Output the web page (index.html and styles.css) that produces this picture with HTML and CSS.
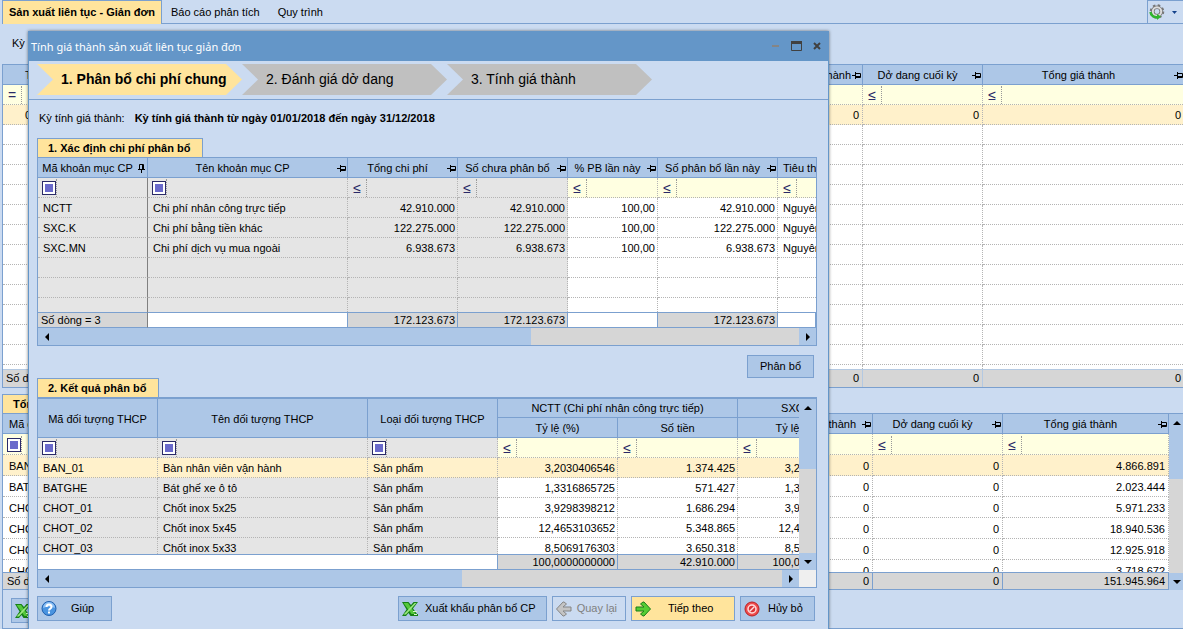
FILE: index.html
```
<!doctype html>
<html lang="vi">

<head>
  <meta charset="utf-8">
  <meta name="viewport" content="width=device-width, initial-scale=1">
  <link rel="stylesheet" href="styles.css">
  <title>Tính giá thành sản xuất liên tục giản đơn</title>
</head>

<body>
  <svg class="sprite" aria-hidden="true">
    <symbol id="pin" viewBox="0 0 9 9">
      <path fill="none" stroke="#000" d="M0 4.500h3M3.500 1v7M4 2.500h4.500v4H4" />
      <path stroke="#000" d="M4 5.500h4" />
    </symbol>
    <symbol id="pin-down" viewBox="0 0 9 9">
      <path fill="none" stroke="#000" d="M2.500 5V.5h4V5M5.500 1v4M1 5.500h7M4.500 6v3" />
    </symbol>
    <symbol id="excel" viewBox="0 0 16 16">
      <path fill="#168016" d="M0 1h6.500l2.500 3 2.500-3H16l-5 6.500 4 5.500h1v2H8.500L6.500 12 4 15H0l4.500-6.500z" />
      <path fill="#55c83c" d="M1.500 2H6l7.500 11H9.500z" />
      <path fill="#9be77f" d="M12.500 2h2L4 13.500H1.500z" />
      <path stroke="#d8f5cc" d="M11 10.500h4M12 13.500h3" />
    </symbol>
    <symbol id="arrow" viewBox="0 0 16 16">
      <path d="M1 6h8L5.500 3 8 1h1l6.500 7L9 15H8l-2.500-2L9 10H1z" stroke-linejoin="round" />
    </symbol>
  </svg>

  <div class="page">
    <nav class="menu">
      <a class="menu-item active" href="#">Sản xuất liên tục - Giản đơn</a>
      <a class="menu-item" href="#">Báo cáo phân tích</a>
      <a class="menu-item" href="#">Quy trình</a>
      <button class="settings" aria-label="Tùy chọn">
        <svg width="16" height="16" viewBox="0 0 16 16">
          <circle cx="8" cy="7.500" r="6" fill="none" stroke="#777" stroke-width="2.500" stroke-dasharray="2.400 2.310" />
          <circle cx="8" cy="7.500" r="4.200" fill="none" stroke="#777" stroke-width="3.500" />
          <circle cx="8" cy="7.500" r="4.200" fill="none" stroke="#ddd" stroke-width="2" />
          <path fill="none" stroke="#2fb52f" stroke-width="2.500" d="M1.500 8c.5 4 4 6 8 5" />
          <path fill="#2fb52f" d="M8 10l4 2.500L8 16z" />
        </svg>
        <svg width="5" height="3" viewBox="0 0 5 3"><path fill="#15428b" d="M0 0h5L2.500 3z" /></svg>
      </button>
    </nav>
    <div class="period">Kỳ</div>

    <div class="grid main-grid">
      <div class="view">
        <table>
          <colgroup><col class="w32"><col><col class="w120"><col class="w120"><col class="w202"></colgroup>
          <thead>
            <tr><th class="start">T</th><th></th>
              <th><div class="head"><span>Khoản giảm giá thành</span><svg><use href="#pin" /></svg></div></th>
              <th><div class="head"><span>Dở dang cuối kỳ</span><svg><use href="#pin" /></svg></div></th>
              <th><div class="head"><span>Tổng giá thành</span><svg><use href="#pin" /></svg></div></th></tr>
            <tr class="filter">
              <td><div class="cell"><button class="op">=</button><input aria-label="Lọc"></div></td>
              <td></td>
              <td><div class="cell"><button class="op">≤</button><input aria-label="Lọc khoản giảm giá thành"></div></td>
              <td><div class="cell"><button class="op">≤</button><input aria-label="Lọc dở dang cuối kỳ"></div></td>
              <td><div class="cell"><button class="op">≤</button><input aria-label="Lọc tổng giá thành"></div></td></tr>
          </thead>
          <tbody>
            <tr class="selected"><td class="num">0</td><td></td><td class="num">0</td><td class="num">0</td><td class="num">0</td></tr>
            <tr><td></td><td></td><td></td><td></td><td></td></tr>
            <tr><td></td><td></td><td></td><td></td><td></td></tr>
            <tr><td></td><td></td><td></td><td></td><td></td></tr>
            <tr><td></td><td></td><td></td><td></td><td></td></tr>
            <tr><td></td><td></td><td></td><td></td><td></td></tr>
            <tr><td></td><td></td><td></td><td></td><td></td></tr>
            <tr><td></td><td></td><td></td><td></td><td></td></tr>
            <tr><td></td><td></td><td></td><td></td><td></td></tr>
            <tr><td></td><td></td><td></td><td></td><td></td></tr>
            <tr><td></td><td></td><td></td><td></td><td></td></tr>
            <tr><td></td><td></td><td></td><td></td><td></td></tr>
            <tr><td></td><td></td><td></td><td></td><td></td></tr>
            <tr><td></td><td></td><td></td><td></td><td></td></tr>
          </tbody>
        </table>
      </div>
      <table class="total">
        <colgroup><col><col class="w120"><col class="w120"><col class="w202"></colgroup>
        <tbody><tr><td>Số dòng = 1</td><td class="num">0</td><td class="num">0</td><td class="num">0</td></tr></tbody>
      </table>
    </div>

    <section class="summary">
      <h2 class="tab">Tổng hợp</h2>
      <div class="grid sum-grid">
        <div class="view">
          <table>
            <colgroup><col><col class="w130"><col class="w130"><col class="w166"></colgroup>
            <thead>
              <tr><th class="start">Mã đối tượng THCP</th>
                <th><div class="head"><span>Khoản giảm giá thành</span><svg><use href="#pin" /></svg></div></th>
                <th><div class="head"><span>Dở dang cuối kỳ</span><svg><use href="#pin" /></svg></div></th>
                <th><div class="head"><span>Tổng giá thành</span><svg><use href="#pin" /></svg></div></th></tr>
              <tr class="filter">
                <td><div class="cell"><button class="op box" aria-label="Điều kiện"></button><input aria-label="Lọc mã"></div></td>
                <td><div class="cell"><button class="op">≤</button><input aria-label="Lọc khoản giảm"></div></td>
                <td><div class="cell"><button class="op">≤</button><input aria-label="Lọc dở dang"></div></td>
                <td><div class="cell"><button class="op">≤</button><input aria-label="Lọc tổng"></div></td></tr>
            </thead>
            <tbody>
              <tr class="selected"><td>BAN_01</td><td class="num">0</td><td class="num">0</td><td class="num">4.866.891</td></tr>
              <tr><td>BATGHE</td><td class="num">0</td><td class="num">0</td><td class="num">2.023.444</td></tr>
              <tr><td>CHOT_01</td><td class="num">0</td><td class="num">0</td><td class="num">5.971.233</td></tr>
              <tr><td>CHOT_02</td><td class="num">0</td><td class="num">0</td><td class="num">18.940.536</td></tr>
              <tr><td>CHOT_03</td><td class="num">0</td><td class="num">0</td><td class="num">12.925.918</td></tr>
              <tr><td>CHOT_04</td><td class="num">0</td><td class="num">0</td><td class="num">3.718.672</td></tr>
            </tbody>
          </table>
        </div>
        <div class="vscroll"><button class="up" aria-label="Lên"></button><div class="thumb"></div><button class="down" aria-label="Xuống"></button></div>
        <table class="total">
          <colgroup><col><col class="w130"><col class="w130"><col class="w166"></colgroup>
          <tbody><tr><td>Số dòng</td><td class="num">0</td><td class="num">0</td><td class="num">151.945.964</td></tr></tbody>
        </table>
      </div>
      <button class="btn export"><svg width="16" height="16"><use href="#excel" /></svg><span>Xuất khẩu</span></button>
    </section>
  </div>

  <div class="dialog" role="dialog" aria-labelledby="dialog-title">
    <header class="titlebar">
      <h1 id="dialog-title">Tính giá thành sản xuất liên tục giản đơn</h1>
      <button aria-label="Thu nhỏ"><svg width="8" height="10"><path stroke="#858585" stroke-width="2" d="M0 5h7" /></svg></button>
      <button aria-label="Phóng to"><svg width="11" height="10"><path fill="none" stroke="#404040" d="M.5 1v8.500h10V1" /><path fill="#404040" d="M0 0h11v3H0z" /></svg></button>
      <button aria-label="Đóng"><svg width="8" height="8"><path stroke="#404040" stroke-width="2" d="M1 1l6 6M7 1L1 7" /></svg></button>
    </header>
    <ol class="steps">
      <li class="current">1. Phân bổ chi phí chung</li>
      <li>2. Đánh giá dở dang</li>
      <li>3. Tính giá thành</li>
    </ol>

    <div class="body">
      <div class="info"><span>Kỳ tính giá thành:</span><b>Kỳ tính giá thành từ ngày 01/01/2018 đến ngày 31/12/2018</b></div>

      <h2 class="tab">1. Xác định chi phí phân bổ</h2>
      <div class="grid cost-grid">
        <div class="view">
          <table>
            <colgroup><col class="w110"><col class="w200"><col class="w110"><col class="w110"><col class="w90"><col class="w120"><col class="w110"></colgroup>
            <thead>
              <tr>
                <th><div class="head"><span>Mã khoản mục CP</span><svg><use href="#pin-down" /></svg></div></th>
                <th><div class="head"><span>Tên khoản mục CP</span><svg><use href="#pin" /></svg></div></th>
                <th><div class="head"><span>Tổng chi phí</span><svg><use href="#pin" /></svg></div></th>
                <th><div class="head"><span>Số chưa phân bổ</span><svg><use href="#pin" /></svg></div></th>
                <th><div class="head"><span>% PB lần này</span><svg><use href="#pin" /></svg></div></th>
                <th><div class="head"><span>Số phân bổ lần này</span><svg><use href="#pin" /></svg></div></th>
                <th><div class="head"><span>Tiêu thức phân bổ</span><svg><use href="#pin" /></svg></div></th>
              </tr>
              <tr class="filter">
                <td class="ro frozen"><div class="cell"><button class="op box" aria-label="Điều kiện"></button><input aria-label="Lọc mã khoản mục"></div></td>
                <td class="ro"><div class="cell"><button class="op box" aria-label="Điều kiện"></button><input aria-label="Lọc tên khoản mục"></div></td>
                <td class="ro"><div class="cell"><button class="op">≤</button><input aria-label="Lọc tổng chi phí"></div></td>
                <td class="ro"><div class="cell"><button class="op">≤</button><input aria-label="Lọc số chưa phân bổ"></div></td>
                <td><div class="cell"><button class="op">≤</button><input aria-label="Lọc % PB"></div></td>
                <td><div class="cell"><button class="op">≤</button><input aria-label="Lọc số phân bổ"></div></td>
                <td><div class="cell"><button class="op">≤</button><input aria-label="Lọc tiêu thức"></div></td>
              </tr>
            </thead>
            <tbody>
              <tr><td class="ro frozen">NCTT</td><td class="ro">Chi phí nhân công trực tiếp</td><td class="ro num">42.910.000</td><td class="ro num">42.910.000</td><td class="num">100,00</td><td class="num">42.910.000</td><td>Nguyên vật liệu</td></tr>
              <tr><td class="ro frozen">SXC.K</td><td class="ro">Chi phí bằng tiền khác</td><td class="ro num">122.275.000</td><td class="ro num">122.275.000</td><td class="num">100,00</td><td class="num">122.275.000</td><td>Nguyên vật liệu</td></tr>
              <tr><td class="ro frozen">SXC.MN</td><td class="ro">Chi phí dịch vụ mua ngoài</td><td class="ro num">6.938.673</td><td class="ro num">6.938.673</td><td class="num">100,00</td><td class="num">6.938.673</td><td>Nguyên vật liệu</td></tr>
              <tr><td class="ro frozen"></td><td class="ro"></td><td class="ro"></td><td class="ro"></td><td></td><td></td><td></td></tr>
              <tr><td class="ro frozen"></td><td class="ro"></td><td class="ro"></td><td class="ro"></td><td></td><td></td><td></td></tr>
              <tr><td class="ro frozen"></td><td class="ro"></td><td class="ro"></td><td class="ro"></td><td></td><td></td><td></td></tr>
            </tbody>
          </table>
        </div>
        <table class="total">
          <colgroup><col class="w110"><col class="w200"><col class="w110"><col class="w110"><col class="w90"><col class="w120"><col></colgroup>
          <tbody><tr><td class="frozen">Số dòng = 3</td><td class="none"></td><td class="num">172.123.673</td><td class="num">172.123.673</td><td class="none"></td><td class="num">172.123.673</td><td class="none"></td></tr></tbody>
        </table>
        <div class="hscroll"><button class="left" aria-label="Sang trái"></button><div class="thumb"></div><button class="right" aria-label="Sang phải"></button></div>
      </div>

      <div class="allocate"><button class="btn">Phân bổ</button></div>

      <h2 class="tab">2. Kết quả phân bổ</h2>
      <div class="grid result-grid">
        <div class="view">
          <table>
            <colgroup><col class="w120"><col class="w210"><col class="w130"><col class="w120"><col class="w120"><col class="w120"><col class="w120"></colgroup>
            <thead>
              <tr><th rowspan="2">Mã đối tượng THCP</th><th rowspan="2">Tên đối tượng THCP</th><th rowspan="2">Loại đối tượng THCP</th><th colspan="2">NCTT (Chi phí nhân công trực tiếp)</th><th colspan="2">SXC.K (Chi phí bằng tiền khác)</th></tr>
              <tr><th>Tỷ lệ (%)</th><th>Số tiền</th><th>Tỷ lệ (%)</th><th>Số tiền</th></tr>
              <tr class="filter">
                <td class="ro"><div class="cell"><button class="op box" aria-label="Điều kiện"></button><input aria-label="Lọc mã đối tượng"></div></td>
                <td class="ro"><div class="cell"><button class="op box" aria-label="Điều kiện"></button><input aria-label="Lọc tên đối tượng"></div></td>
                <td class="ro"><div class="cell"><button class="op box" aria-label="Điều kiện"></button><input aria-label="Lọc loại đối tượng"></div></td>
                <td><div class="cell"><button class="op">≤</button><input aria-label="Lọc tỷ lệ NCTT"></div></td>
                <td><div class="cell"><button class="op">≤</button><input aria-label="Lọc số tiền NCTT"></div></td>
                <td><div class="cell"><button class="op">≤</button><input aria-label="Lọc tỷ lệ SXC.K"></div></td>
                <td><div class="cell"><button class="op">≤</button><input aria-label="Lọc số tiền SXC.K"></div></td>
              </tr>
            </thead>
            <tbody>
              <tr class="selected"><td>BAN_01</td><td>Bàn nhân viên vận hành</td><td>Sản phẩm</td><td class="num">3,2030406546</td><td class="num">1.374.425</td><td class="num">3,2030406546</td><td></td></tr>
              <tr><td class="ro">BATGHE</td><td class="ro">Bát ghế xe ô tô</td><td class="ro">Sản phẩm</td><td class="num">1,3316865725</td><td class="num">571.427</td><td class="num">1,3316865725</td><td></td></tr>
              <tr><td class="ro">CHOT_01</td><td class="ro">Chốt inox 5x25</td><td class="ro">Sản phẩm</td><td class="num">3,9298398212</td><td class="num">1.686.294</td><td class="num">3,9298398212</td><td></td></tr>
              <tr><td class="ro">CHOT_02</td><td class="ro">Chốt inox 5x45</td><td class="ro">Sản phẩm</td><td class="num">12,4653103652</td><td class="num">5.348.865</td><td class="num">12,4653103652</td><td></td></tr>
              <tr><td class="ro">CHOT_03</td><td class="ro">Chốt inox 5x33</td><td class="ro">Sản phẩm</td><td class="num">8,5069176303</td><td class="num">3.650.318</td><td class="num">8,5069176303</td><td></td></tr>
            </tbody>
          </table>
        </div>
        <div class="vscroll"><button class="up" aria-label="Lên"></button><div class="thumb"></div><button class="down" aria-label="Xuống"></button></div>
        <div class="total-clip">
          <table class="total">
            <colgroup><col class="w460"><col class="w120"><col class="w120"><col class="w120"><col class="w120"></colgroup>
            <tbody><tr><td class="none"></td><td class="num">100,0000000000</td><td class="num">42.910.000</td><td class="num">100,0000000000</td><td></td></tr></tbody>
          </table>
        </div>
        <div class="hscroll"><button class="left" aria-label="Sang trái"></button><div class="thumb"></div><button class="right" aria-label="Sang phải"></button></div>
        <div class="corner"></div>
      </div>

      <footer class="actions">
        <button class="btn help">
          <svg width="16" height="16" viewBox="0 0 16 16">
            <circle cx="8" cy="7.500" r="7" fill="#4a94e0" stroke="#1f5fae" />
            <path fill="#8cc0f5" d="M2 7a6 6 0 0 1 12 0c-4-2-8-2-12 0z" />
            <path fill="none" stroke="#fff" stroke-width="2" d="M5.500 6c0-3.500 5-3.500 5 0 0 1.500-2.500 1.500-2.500 3.500M8 10.500v2" />
          </svg>
          <span>Giúp</span></button>
        <button class="btn"><svg width="16" height="16"><use href="#excel" /></svg><span>Xuất khẩu phân bổ CP</span></button>
        <button class="btn back" disabled><svg width="16" height="16"><use href="#arrow" /></svg><span>Quay lại</span></button>
        <button class="btn next"><svg width="16" height="16"><use href="#arrow" /></svg><span>Tiếp theo</span></button>
        <button class="btn cancel">
          <svg width="16" height="16" viewBox="0 0 16 16">
            <circle cx="8" cy="8" r="7" fill="#f04b4b" stroke="#b81f24" />
            <circle cx="8" cy="8" r="4" fill="#d93236" stroke="#ffdede" stroke-width="1.500" />
            <path stroke="#ffdede" stroke-width="1.500" d="M5.500 10.500l5-5" />
          </svg>
          <span>Hủy bỏ</span></button>
      </footer>
    </div>
  </div>
</body>

</html>
```

FILE: styles.css
```
* {
  box-sizing: border-box;
}

body {
  margin: 0;
  height: 100vh;
  overflow: hidden;
  font-family: "Liberation Sans", Arial, sans-serif;
  font-size: 11px;
  line-height: 19px;
  color: #000;
  background-color: #cbdbf1;
}

button,
input {
  font: inherit;
  color: inherit;
  margin: 0;
  padding: 0;
  border: none;
  border-radius: 0;
  background: none;
}

h1,
h2 {
  margin: 0;
  font-size: 11px;
}

.sprite {
  display: none;
}

/* page behind the dialog */
.page {
  display: flex;
  flex-direction: column;
  height: 100vh;
  margin-right: -3px;
  padding-left: 2px;
}

.menu {
  display: flex;
  height: 24px;
  padding-right: 3px;
  border-bottom: 1px solid #7ba0cf;
}

.menu-item {
  padding: 3px 9px 0 9px;
  color: #000;
  text-decoration: none;
}

.menu-item.active {
  height: 24px;
  padding: 2px 6px 0 6px;
  font-weight: bold;
  background-color: #ffe49c;
  border: 1px solid #7ba0cf;
  border-bottom: none;
}

.settings {
  display: flex;
  align-items: center;
  gap: 7px;
  width: 36px;
  margin-left: auto;
  padding-left: 1px;
  border-top: 1px solid #7ba0cf;
  border-left: 1px solid #7ba0cf;
}

.period {
  height: 40px;
  padding: 10px;
}

.summary {
  flex: 1;
  margin-top: 6px;
  border-left: 1px solid #7ba0cf;
  border-bottom: 1px solid #7ba0cf;
}

.summary .tab {
  margin-left: -1px;
}

/* grids */
.grid {
  border: 1px solid #7ba0cf;
}

.view {
  overflow: hidden;
  background-color: #fff;
}

table {
  width: 100%;
  table-layout: fixed;
  border-collapse: separate;
  border-spacing: 0;
}

th,
td {
  height: 20px;
  padding: 1px 2px 0 5px;
  overflow: hidden;
  line-height: 18px;
  white-space: nowrap;
}

th {
  padding: 1px 0 0;
  font-weight: normal;
  background-color: #adc7e7;
  border-right: 1px solid #7ba0cf;
  border-bottom: 1px solid #7ba0cf;
}

th.start {
  padding-left: 6px;
  text-align: left;
}

td {
  background-color: #fff;
  border-right: 1px dotted #b4b4b4;
  border-bottom: 1px dotted #b4b4b4;
}

.num {
  text-align: right;
}

.ro {
  background-color: #e5e5e5;
}

.frozen {
  border-right: 1px solid #808080;
}

.selected td {
  background-color: #fff1cb;
}

.filter td {
  padding: 0;
  background-color: #ffffe1;
}

.filter .ro {
  background-color: #e5e5e5;
}

.head {
  display: flex;
  align-items: center;
}

.head span {
  flex: 1;
}

.head svg {
  width: 9px;
  height: 9px;
  margin-right: 1px;
}

.cell {
  display: flex;
  height: 19px;
}

.cell input {
  flex: 1;
  min-width: 0;
}

.op {
  flex: none;
  width: 19px;
  margin-top: 1px;
  line-height: 16px;
  font-size: 14px;
  color: #2a2a68;
  border-right: 1px dotted #999;
}

.box {
  display: flex;
  align-items: flex-start;
  padding: 2px 0 0 4px;
}

.box::before {
  content: "";
  width: 12px;
  height: 12px;
  background-color: #6a6acb;
  border: 1px solid #2a2a68;
  box-shadow: inset 0 0 0 2px #fff;
}

.total td {
  height: 16px;
  padding-top: 0;
  padding-left: 3px;
  line-height: 14px;
  background-color: #d6d6d6;
  border: solid #7ba0cf;
  border-width: 1px 1px 1px 0;
}

.total .frozen {
  border-right-color: #808080;
}

.total .none {
  background-color: #fff;
}

.w32 { width: 32px; }
.w90 { width: 90px; }
.w110 { width: 110px; }
.w120 { width: 120px; }
.w130 { width: 130px; }
.w166 { width: 166px; }
.w200 { width: 200px; }
.w202 { width: 202px; }
.w210 { width: 210px; }
.w460 { width: 460px; }

.main-grid .view {
  height: 304px;
}

.main-grid .start {
  padding-left: 22px;
}

.page td {
  padding-right: 3px;
}

.page .filter td {
  padding-right: 0;
}

.main-grid .total td {
  height: 18px;
  line-height: 17px;
  border-color: #b4c9e2;
  border-bottom: none;
}

.sum-grid {
  display: grid;
  grid-template-columns: minmax(0, 1fr) 16px;
  margin-left: -1px;
  border-bottom: none;
}

.sum-grid .view {
  height: 158px;
}

.sum-grid td {
  height: 21px;
  padding-left: 6px;
}

.sum-grid .filter td {
  padding-left: 0;
}

.sum-grid .total td {
  height: 18px;
  padding-left: 4px;
  line-height: 16px;
}

/* scrollbars */
.vscroll {
  display: flex;
  flex-direction: column;
  grid-column: 2;
  grid-row: 1 / 3;
  background-color: #d6d6d6;
}

.hscroll {
  display: flex;
  height: 17px;
  background-color: #d6d6d6;
}

.thumb {
  flex: 1;
  background-image: linear-gradient(#adc7e7, #adc7e7);
  background-repeat: no-repeat;
}

.sum-grid .vscroll .thumb {
  background-size: 100% 34%;
}

.result-grid .vscroll .thumb {
  background-size: 100% 39%;
}

.cost-grid .hscroll .thumb {
  background-size: 64% 100%;
}

.result-grid .hscroll .thumb {
  background-size: 56% 100%;
}

.hscroll button,
.vscroll button {
  display: flex;
  align-items: center;
  justify-content: center;
  flex: none;
  width: 17px;
  height: 17px;
  background-color: #adc7e7;
}

.vscroll button {
  width: 100%;
}

.up::before,
.down::before,
.left::before,
.right::before {
  content: "";
  border: 0 solid transparent;
}

.up::before {
  border-width: 0 4px 4px;
  border-bottom-color: #000;
}

.down::before {
  border-width: 4px 4px 0;
  border-top-color: #000;
}

.left::before {
  border-width: 4px 4px 4px 0;
  border-right-color: #000;
}

.right::before {
  border-width: 4px 0 4px 4px;
  border-left-color: #000;
}

/* dialog */
.dialog {
  position: absolute;
  top: 31px;
  left: 28px;
  right: 354px;
  bottom: 0;
  overflow: hidden;
  background-color: #cbdbf1;
  border: solid #6496c8;
  border-width: 0 1px;
  box-shadow: 0 0 3px rgba(0, 0, 0, 0.5);
}

.titlebar {
  display: flex;
  align-items: center;
  gap: 11px;
  height: 30px;
  padding: 0 7px 0 2px;
  background-color: #6496c8;
}

.titlebar h1 {
  flex: 1;
  font-family: "Noto Sans", "Open Sans", sans-serif;
  font-size: 11px;
  font-weight: normal;
  color: #fff;
}

.titlebar button {
  display: flex;
}

.steps {
  display: flex;
  height: 39px;
  margin: 0;
  padding: 3px 8px 4px;
  list-style: none;
  border-bottom: 1px solid #7ba0cf;
}

.steps li {
  width: 205px;
  padding-left: 24px;
  font-size: 14px;
  line-height: 31px;
  background-color: #c0c0c0;
  clip-path: polygon(0 0, 189px 0, 100% 50%, 189px 100%, 0 100%, 16px 50%);
}

.steps .current {
  font-weight: bold;
  background-color: #ffe49c;
}

.body {
  padding: 0 11px 0 8px;
}

.info {
  display: flex;
  gap: 10px;
  height: 38px;
  padding: 9px 2px;
}

.tab {
  width: fit-content;
  height: 19px;
  padding: 0 12px 0 10px;
  line-height: 18px;
  background-color: #ffe49c;
  border: 1px solid #7ba0cf;
  border-bottom: none;
}

.cost-grid .view {
  height: 154px;
}

.cost-grid .view table {
  width: 850px;
}

.allocate {
  display: flex;
  justify-content: flex-end;
  padding: 9px 3px 0 0;
}

.btn {
  display: flex;
  align-items: center;
  height: 25px;
  padding: 0 10px 0 3px;
  background-color: #adc7e7;
  border: 1px solid #7ba0cf;
}

.btn svg {
  flex: none;
  margin-right: 7px;
}

.allocate .btn {
  height: 23px;
  padding: 0 12px;
}

.result-grid {
  display: grid;
  grid-template-columns: minmax(0, 1fr) 17px;
  border-top-width: 2px;
}

.result-grid .view {
  height: 155px;
}

.result-grid .view table {
  width: 940px;
}

.result-grid th[colspan] {
  height: 19px;
  padding-top: 0;
}

.total-clip {
  overflow: hidden;
}

.total-clip .total {
  width: 940px;
}

.corner {
  background-color: #efefef;
}

.actions {
  display: flex;
  gap: 5px;
  padding: 8px 2px 0 0;
}

.actions .help {
  width: 75px;
  margin-right: auto;
}

.help svg {
  margin-right: 14px;
}

.back {
  color: #808080;
  background-color: #cbdbf1;
  padding-right: 8px;
}

.back svg {
  margin-right: 5px;
  fill: #c4c4c4;
  stroke: #858585;
  transform: scaleX(-1);
}

.next {
  width: 104px;
  background-color: #ffe49c;
}

.next svg {
  margin-right: 17px;
  fill: #55cc33;
  stroke: #1b7d1b;
}

.cancel {
  width: 75px;
}

.cancel svg {
  margin-right: 8px;
}

.summary .export {
  margin: 8px 0 0 8px;
}
```
